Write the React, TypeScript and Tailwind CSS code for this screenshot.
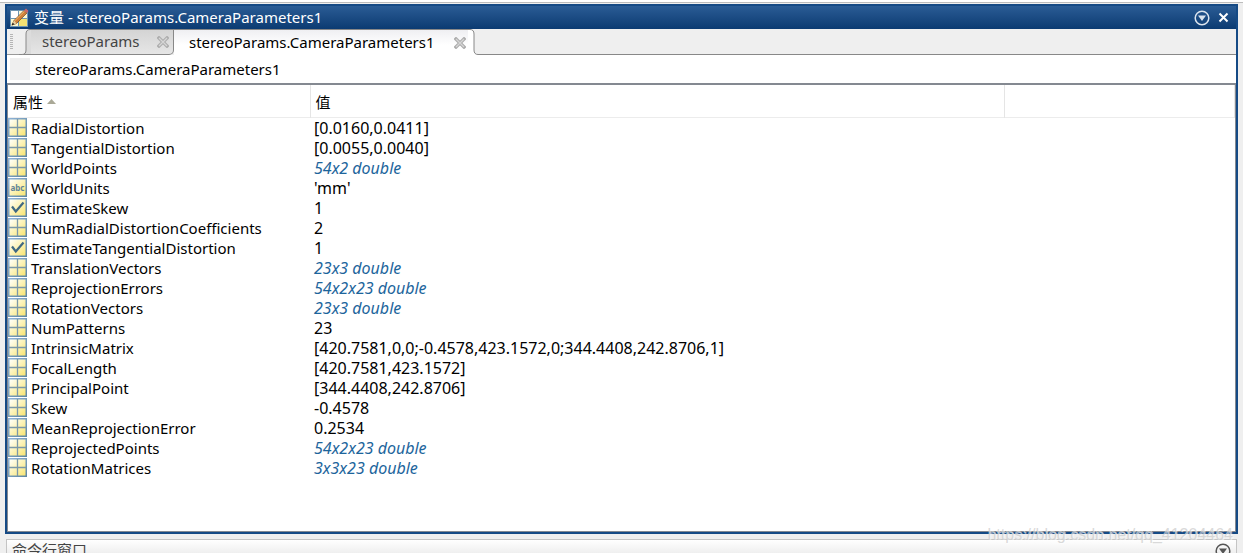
import React from "react";

type Kind = "matrix" | "text" | "logical";
type Row = { name: string; value: string; kind: Kind; summary?: boolean };

const rows: Row[] = [
  { name: "RadialDistortion", value: "[0.0160,0.0411]", kind: "matrix" },
  { name: "TangentialDistortion", value: "[0.0055,0.0040]", kind: "matrix" },
  { name: "WorldPoints", value: "54x2 double", kind: "matrix", summary: true },
  { name: "WorldUnits", value: "'mm'", kind: "text" },
  { name: "EstimateSkew", value: "1", kind: "logical" },
  { name: "NumRadialDistortionCoefficients", value: "2", kind: "matrix" },
  { name: "EstimateTangentialDistortion", value: "1", kind: "logical" },
  { name: "TranslationVectors", value: "23x3 double", kind: "matrix", summary: true },
  { name: "ReprojectionErrors", value: "54x2x23 double", kind: "matrix", summary: true },
  { name: "RotationVectors", value: "23x3 double", kind: "matrix", summary: true },
  { name: "NumPatterns", value: "23", kind: "matrix" },
  { name: "IntrinsicMatrix", value: "[420.7581,0,0;-0.4578,423.1572,0;344.4408,242.8706,1]", kind: "matrix" },
  { name: "FocalLength", value: "[420.7581,423.1572]", kind: "matrix" },
  { name: "PrincipalPoint", value: "[344.4408,242.8706]", kind: "matrix" },
  { name: "Skew", value: "-0.4578", kind: "matrix" },
  { name: "MeanReprojectionError", value: "0.2534", kind: "matrix" },
  { name: "ReprojectedPoints", value: "54x2x23 double", kind: "matrix", summary: true },
  { name: "RotationMatrices", value: "3x3x23 double", kind: "matrix", summary: true },
];

function KindIcon({ kind }: { kind: Kind }) {
  return (
    <svg width="19" height="19" viewBox="0 0 19 19" className="block shrink-0" aria-hidden="true">
      <defs>
        <linearGradient id="cell" x1="0" y1="0" x2="1" y2="1">
          <stop offset="0.1" stopColor="#fffef2" />
          <stop offset="1" stopColor="#f8e46c" />
        </linearGradient>
        <linearGradient id="frame" x1="0" y1="0" x2="1" y2="1">
          <stop offset="0" stopColor="#8db2d6" />
          <stop offset="1" stopColor="#5f87a3" />
        </linearGradient>
      </defs>
      <rect x="0.75" y="0.75" width="17.5" height="17.5" fill="url(#cell)" stroke="url(#frame)" strokeWidth="1.5" />
      {kind === "matrix" && <path d="M9.5 1v17M1 9.5h17" stroke="#7b98a8" strokeWidth="1.3" />}
      {kind === "logical" && (
        <path d="M4 8.5 7.8 13.5 15.5 4.5" fill="none" stroke="#3f6882" strokeWidth="2.2" />
      )}
      {kind === "text" && (
        <text x="9.5" y="13" textAnchor="middle" fontSize="8" fontWeight="700" fontFamily="Noto Sans, sans-serif" fill="#5f8399">
          abc
        </text>
      )}
    </svg>
  );
}

function EditIcon() {
  return (
    <svg width="20" height="20" viewBox="0 0 20 20" className="shrink-0" aria-hidden="true">
      <rect x="1" y="2" width="18" height="17" fill="#6e96b4" />
      <path d="M2 3h7v7H2z" fill="#fff" />
      <path d="M10 3h8v7h-8z" fill="#fdf9d3" />
      <path d="M2 11h7v7H2z" fill="#fdf8cc" />
      <path d="M10 11h8v7h-8z" fill="#f4e273" />
      <path d="M3 17 5 12.500 15 2.500 18 5 7.500 15.500Z" fill="#cf8038" stroke="#70461f" strokeWidth="0.7" />
      <path d="M5.500 13 15.500 3.200" stroke="#f5bd70" strokeWidth="1" />
      <path d="M15 2.500 17 .5 19.500 3 18 5Z" fill="#c9676a" />
      <path d="M3 17 5 12.500 7.500 15.500Z" fill="#ead2a2" />
      <path d="M2.500 17.500 3.800 14.800 5.500 16.300Z" fill="#222" />
    </svg>
  );
}

function CloseTab() {
  return (
    <svg width="12" height="12" viewBox="0 0 12 12" aria-hidden="true">
      <path d="M2 2l8 8M10 2l-8 8" stroke="#adadad" strokeWidth="3.4" strokeLinecap="square" />
      <path d="M2 2l8 8M10 2l-8 8" stroke="#d6d6d6" strokeWidth="1.2" />
    </svg>
  );
}

function MenuIcon() {
  return (
    <svg width="16" height="16" viewBox="0 0 16 16" aria-hidden="true">
      <circle cx="8" cy="8" r="6.8" fill="none" stroke="currentColor" strokeWidth="1.5" />
      <path d="M4 5.500h8L8 11z" fill="currentColor" />
    </svg>
  );
}

export default function App() {
  return (
    <div className="h-screen overflow-hidden bg-[#efefef] font-['Noto_Sans','Noto_Sans_CJK_SC',sans-serif] text-[15px] leading-5 text-black">
      <div className="h-1 border-b border-[#efefef] bg-white">
        <div className="h-[3px] border-b border-[#bdbdbd]" />
      </div>
      <main className="mx-[5px] border-2 border-[#154a85] bg-white">
        <header className="flex h-[23px] items-center bg-linear-to-b from-[#2a5c95] to-[#0b3b72] pr-[7px] pl-[2px] text-white">
          <EditIcon />
          <h1 className="ml-[5px] grow pb-[2px] whitespace-nowrap">变量 - stereoParams.CameraParameters1</h1>
          <button aria-label="面板操作" className="text-[#dbe4ee]"><MenuIcon /></button>
          <button aria-label="关闭" className="ml-2">
            <svg width="11" height="11" viewBox="0 0 11 11" aria-hidden="true">
              <path d="M1.500 1.500l8 8M9.500 1.500l-8 8" stroke="#fff" strokeWidth="2" />
            </svg>
          </button>
        </header>

        <nav className="flex h-[26px] bg-[#efefef]" aria-label="变量">
          <div className="flex w-3 items-center border-b border-[#999] pl-[3px]">
            <div className="h-4 w-[3px] bg-[repeating-linear-gradient(to_bottom,#b5b5b5_0px,#b5b5b5_1px,#efefef_1px,#efefef_2px)]" />
          </div>
          <svg width="12" height="26" viewBox="0 0 12 26" className="shrink-0" aria-hidden="true">
            <path d="M0 25.500H3Q7 25.500 7 21V5Q7 .5 11 .5H12V25.500Z" fill="#dcdcdc" />
            <path d="M0 25.500H3Q7 25.500 7 21V5Q7 .5 11 .5H12M4 25.500H12" fill="none" stroke="#888" />
          </svg>
          <div className="flex w-[143px] items-center justify-between rounded-br-[5px] border-t border-r border-b border-[#888] bg-linear-to-b from-[#d4d4d4] to-[#e6e6e6] pr-1 pl-[11px]">
            <button className="pb-[2px] text-[#444]">stereoParams</button>
            <button aria-label="关闭 stereoParams"><CloseTab /></button>
          </div>
          <div className="flex w-[294px] items-center justify-between border-t border-[#888] bg-linear-to-b from-[#efeff2] to-white to-60% pr-[2px] pl-[15px]">
            <button className="pb-[2px]">stereoParams.CameraParameters1</button>
            <button aria-label="关闭 stereoParams.CameraParameters1"><CloseTab /></button>
          </div>
          <svg width="12" height="26" viewBox="0 0 12 26" className="shrink-0" aria-hidden="true">
            <path d="M0 .5H2Q6 .5 6 5V21Q6 25.500 10 25.500H12V26H0Z" fill="#fff" />
            <path d="M0 .5H2Q6 .5 6 5V21Q6 25.500 10 25.500H12" fill="none" stroke="#888" />
          </svg>
          <div className="grow border-b border-[#888]" />
        </nav>

        <div className="flex h-7 items-center pl-[3px]">
          <div className="h-[22px] w-5 bg-[#efefef]" />
          <span className="ml-[5px]">stereoParams.CameraParameters1</span>
        </div>

        <section className="h-[449px] border-t-2 border-r border-b border-l border-[#848991]">
          <table className="w-full table-fixed border-collapse">
            <colgroup>
              <col className="w-[302px]" />
              <col className="w-[694px]" />
              <col />
            </colgroup>
            <thead>
              <tr className="h-8 border-b border-[#ececec] text-left">
                <th className="border-r border-[#e5e5e5] p-0 pt-[2px] pl-[5px] font-normal">
                  <button className="flex items-center gap-1">
                    属性
                    <svg width="9" height="5" viewBox="0 0 9 5" aria-hidden="true"><path d="M0 5 4.500 0 9 5Z" fill="#aaa997" /></svg>
                  </button>
                </th>
                <th className="border-r border-[#e5e5e5] p-0 pt-[2px] pl-[5px] font-normal">值</th>
                <th className="border-r border-[#e5e5e5] p-0" />
              </tr>
            </thead>
            <tbody>
              {rows.map((row) => (
                <tr key={row.name} className="h-5">
                  <td className="p-0">
                    <div className="flex h-5 items-center gap-1 whitespace-nowrap">
                      <KindIcon kind={row.kind} />
                      {row.name}
                    </div>
                  </td>
                  <td
                    className={
                      row.summary
                        ? "p-0 pl-1 text-[16px] leading-5 text-[#1d659c] italic"
                        : "p-0 pl-1 text-[16px] leading-5"
                    }
                  >
                    {row.value}
                  </td>
                  <td className="p-0" />
                </tr>
              ))}
            </tbody>
          </table>
        </section>
      </main>

      <div className="relative mx-[6px] mt-[5px] flex h-6 items-start justify-between border border-[#c4c4c4] bg-linear-to-b from-white to-[#e4e4e4] pr-[5px] pl-[5px] text-[#444]">
        <h2>命令行窗口</h2>
        <button aria-label="命令行窗口操作" className="mt-[3px] text-[#555]"><MenuIcon /></button>
        <span className="absolute -top-[15px] right-[3px] font-['Liberation_Sans',sans-serif] text-[16px] whitespace-nowrap text-[#d0d0d0]/80 [text-shadow:1px_1px_0_#ffffff99]">
          https://blog.csdn.net/qq_41204464
        </span>
      </div>
    </div>
  );
}
